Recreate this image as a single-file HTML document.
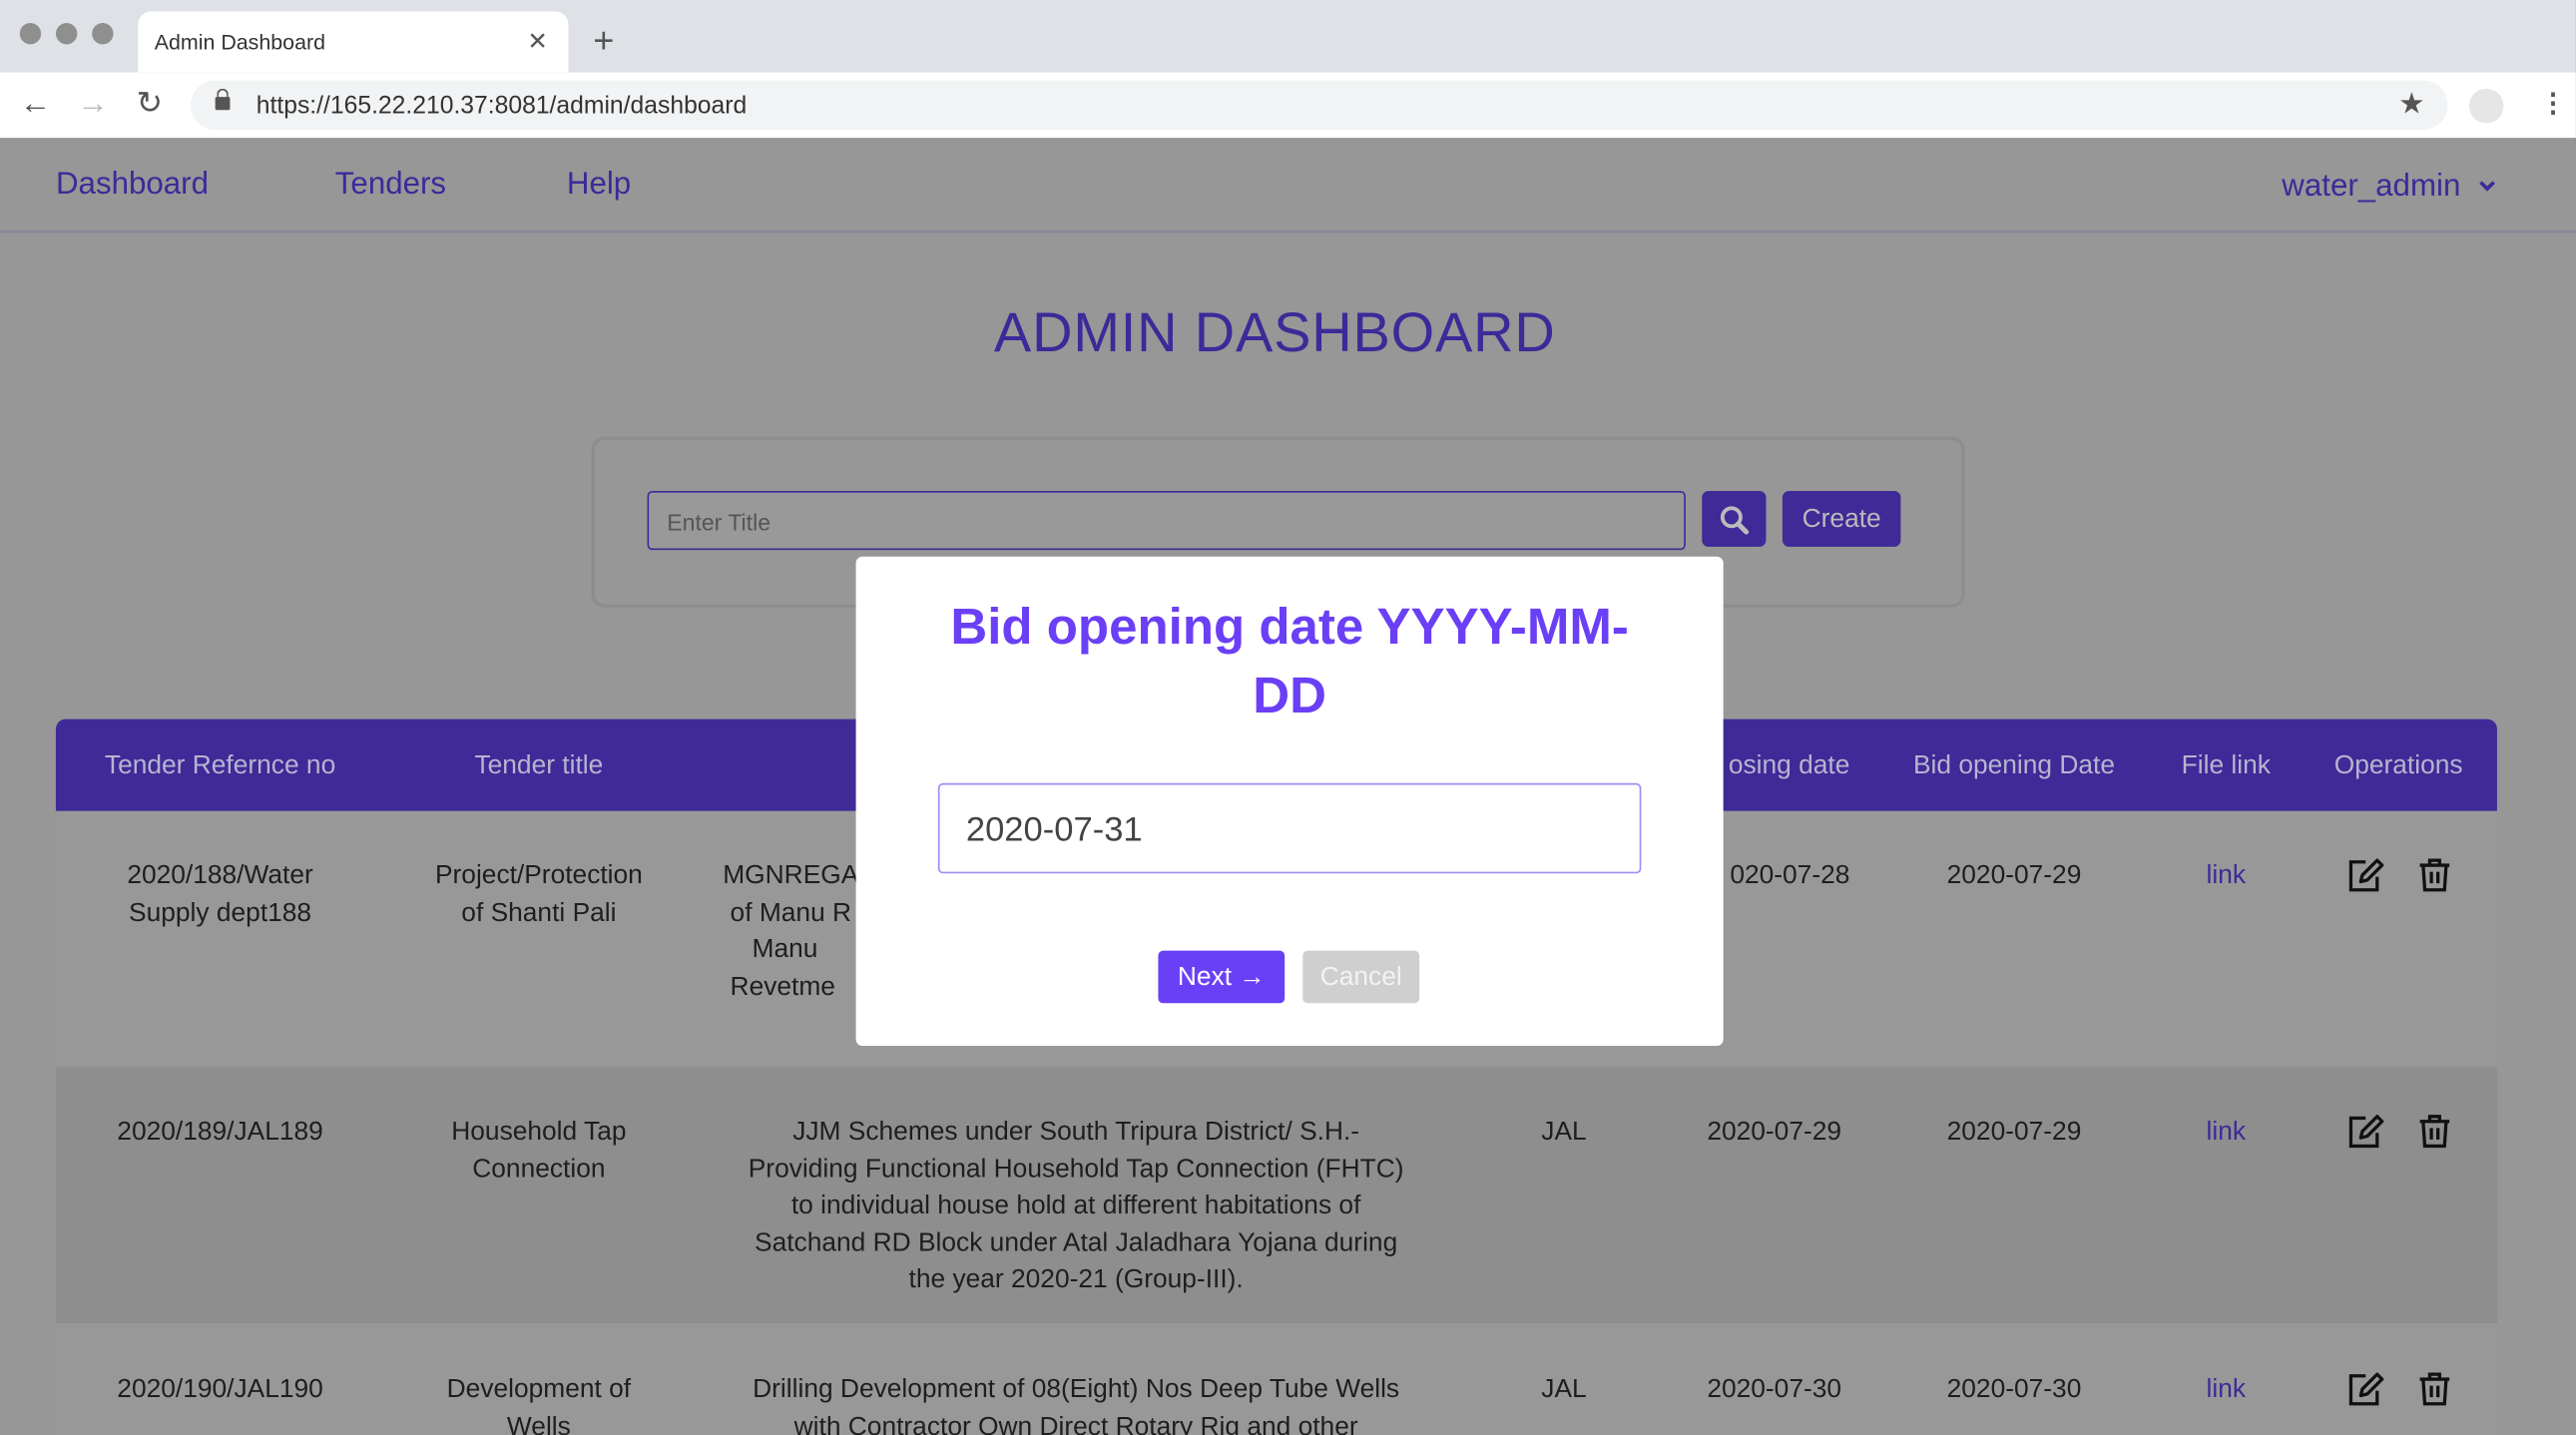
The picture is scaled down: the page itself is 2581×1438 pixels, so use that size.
<!DOCTYPE html>
<html><head><meta charset="utf-8"><style>
html,body{margin:0;padding:0;width:2581px;height:1438px;overflow:hidden;background:#979797}
#w{position:absolute;left:0;top:0;width:1568px;height:874px;transform:scale(1.646,1.6453);transform-origin:0 0;font-family:"Liberation Sans",sans-serif;overflow:hidden;background:#979797}
.a{position:absolute}
.tabbar{left:0;top:0;width:1568px;height:44px;background:#dee1e6}
.dot{width:13px;height:13px;border-radius:50%;background:#8f8f8f;top:14px}
.tab{left:84px;top:7px;width:262px;height:37px;background:#fff;border-radius:8px 8px 0 0}
.addr{left:0;top:44px;width:1568px;height:40px;background:#fff}
.url{left:116px;top:49px;width:1374px;height:30px;background:#f1f3f4;border-radius:15px}
.nav{left:0;top:84px;width:1568px;height:56px;background:#979797;border-bottom:2px solid #8c8a98}
.nl{color:#3c2a99;font-size:19px;top:101px}
.hd{background:#3f2a98;left:34px;top:438px;width:1486px;height:56px;border-radius:6px 6px 0 0}
.th{color:#b8b4d0;font-size:16px;top:458px;text-align:center}
.td{color:#1e1e1e;font-size:16px;text-align:center;line-height:22.5px}
.lk{color:#3c2a99}
</style></head><body><div id="w">
<div class="a tabbar"></div>
<div class="a dot" style="left:12px"></div><div class="a dot" style="left:34px"></div><div class="a dot" style="left:56px"></div>
<div class="a tab"></div>
<div class="a" style="left:94px;top:18px;font-size:13px;color:#333">Admin Dashboard</div>
<div class="a" style="left:321px;top:16px;font-size:15px;color:#555">✕</div>
<div class="a" style="left:361px;top:12px;font-size:22px;color:#555">+</div>
<div class="a addr"></div>
<div class="a" style="left:12px;top:53px;font-size:19px;color:#555">←</div>
<div class="a" style="left:47px;top:53px;font-size:19px;color:#bbb">→</div>
<div class="a" style="left:83px;top:52px;font-size:19px;color:#555">↻</div>
<div class="a url"></div>
<div class="a" style="left:131px;top:59px;width:9px;height:8px;background:#555;border-radius:1px"></div>
<div class="a" style="left:132px;top:54px;width:5px;height:6px;border:1.5px solid #555;border-bottom:none;border-radius:4px 4px 0 0"></div>
<div class="a" style="left:156px;top:56px;font-size:15px;color:#333">https://165.22.210.37:8081/admin/dashboard</div>
<div class="a" style="left:1460px;top:53px;font-size:18px;color:#555">★</div>
<div class="a" style="left:1503px;top:54px;width:21px;height:21px;border-radius:50%;background:#e6e6e6"></div>
<div class="a" style="left:1546px;top:53px;font-size:16px;color:#555;font-weight:bold">⋮</div>
<div class="a nav"></div>
<div class="a nl" style="left:34px;top:102px">Dashboard</div>
<div class="a nl" style="left:204px;top:102px">Tenders</div>
<div class="a nl" style="left:345px;top:102px">Help</div>
<div class="a nl" style="left:1389px;top:103px">water_admin</div>
<svg class="a" style="left:1508px;top:108px" width="12" height="10" viewBox="0 0 12 10"><path d="M2 3 L6 7 L10 3" stroke="#3c2a99" stroke-width="2.2" fill="none"/></svg>
<div class="a" style="left:0;top:184px;width:1552px;text-align:center;font-size:34px;color:#3c2a99;letter-spacing:0.5px">ADMIN DASHBOARD</div>
<div class="a" style="left:360px;top:266px;width:832px;height:100px;border:2px solid #8d8d8d;border-radius:8px;background:#979797"></div>
<div class="a" style="left:394px;top:299px;width:630px;height:34px;border:1.5px solid #3f2a98;border-radius:3px;background:#999"></div>
<div class="a" style="left:406px;top:310px;font-size:14px;color:#555">Enter Title</div>
<div class="a" style="left:1036px;top:299px;width:39px;height:34px;background:#3f2a98;border-radius:4px"></div>
<svg class="a" style="left:1046px;top:307px" width="19" height="19" viewBox="0 0 19 19"><circle cx="8" cy="8" r="5.5" stroke="#bbb" stroke-width="2.3" fill="none"/><path d="M12 12 L17 17" stroke="#bbb" stroke-width="3" stroke-linecap="round"/></svg>
<div class="a" style="left:1085px;top:299px;width:72px;height:34px;background:#3f2a98;border-radius:4px;color:#bbb;text-align:center;font-size:16px;line-height:36px">Create</div>
<div class="a hd"></div>
<div class="a th" style="left:34px;width:200px">Tender Refernce no</div>
<div class="a th" style="left:238px;width:180px">Tender title</div>
<div class="a th" style="left:1030px;width:96px;text-align:right">osing date</div>
<div class="a th" style="left:1150px;width:152px">Bid opening Date</div>
<div class="a th" style="left:1315px;width:80px">File link</div>
<div class="a th" style="left:1405px;width:110px">Operations</div>
<div class="a" style="left:34px;top:494px;width:1486px;height:156px;background:#989898"></div>
<div class="a" style="left:34px;top:650px;width:1486px;height:156px;background:#8e8e8f"></div>
<div class="a" style="left:34px;top:806px;width:1486px;height:80px;background:#989898"></div>
<div class="a td" style="left:34px;width:200px;top:523px">2020/188/Water<br>Supply dept188</div>
<div class="a td" style="left:238px;width:180px;top:523px">Project/Protection<br>of Shanti Pali</div>
<div class="a td" style="left:430px;width:100px;top:523px;text-align:left;padding-left:10px">MGNREGA<br>&nbsp;of Manu R<br>&nbsp;&nbsp;&nbsp;&nbsp;Manu<br>&nbsp;Revetme</div>
<div class="a td" style="left:1036px;width:90px;top:523px;text-align:right">020-07-28</div>
<div class="a td" style="left:1150px;width:152px;top:523px">2020-07-29</div>
<div class="a td lk" style="left:1315px;width:80px;top:523px">link</div>
<div class="a td" style="left:34px;width:200px;top:679px">2020/189/JAL189</div>
<div class="a td" style="left:238px;width:180px;top:679px">Household Tap<br>Connection</div>
<div class="a td" style="left:420px;width:470px;top:679px">JJM Schemes under South Tripura District/ S.H.-<br>Providing Functional Household Tap Connection (FHTC)<br>to individual house hold at different habitations of<br>Satchand RD Block under Atal Jaladhara Yojana during<br>the year 2020-21 (Group-III).</div>
<div class="a td" style="left:912px;width:80px;top:679px">JAL</div>
<div class="a td" style="left:1020px;width:120px;top:679px">2020-07-29</div>
<div class="a td" style="left:1150px;width:152px;top:679px">2020-07-29</div>
<div class="a td lk" style="left:1315px;width:80px;top:679px">link</div>
<div class="a td" style="left:34px;width:200px;top:836px">2020/190/JAL190</div>
<div class="a td" style="left:238px;width:180px;top:836px">Development of<br>Wells</div>
<div class="a td" style="left:420px;width:470px;top:836px">Drilling Development of 08(Eight) Nos Deep Tube Wells<br>with Contractor Own Direct Rotary Rig and other</div>
<div class="a td" style="left:912px;width:80px;top:836px">JAL</div>
<div class="a td" style="left:1020px;width:120px;top:836px">2020-07-30</div>
<div class="a td" style="left:1150px;width:152px;top:836px">2020-07-30</div>
<div class="a td lk" style="left:1315px;width:80px;top:836px">link</div>
<svg width="0" height="0" style="position:absolute"><defs>
<g id="ed"><path d="M12 4 H3 V21 H19 V13" stroke="#111" stroke-width="2" fill="none"/><path d="M9 16 L10 12 L19 3 L22 6 L13 15 Z" stroke="#111" stroke-width="2" fill="none" stroke-linejoin="round"/></g>
<g id="tr"><path d="M2 6 H20 M8 6 V3 H14 V6" stroke="#111" stroke-width="2" fill="none"/><path d="M4 6 L5 21 H17 L18 6" stroke="#111" stroke-width="2" fill="none"/><path d="M9 10 V17 M13 10 V17" stroke="#111" stroke-width="2"/></g>
</defs></svg>
<svg class="a" style="left:1428px;top:521px" width="24" height="24"><use href="#ed"/></svg>
<svg class="a" style="left:1471px;top:521px" width="22" height="24"><use href="#tr"/></svg>
<svg class="a" style="left:1428px;top:677px" width="24" height="24"><use href="#ed"/></svg>
<svg class="a" style="left:1471px;top:677px" width="22" height="24"><use href="#tr"/></svg>
<svg class="a" style="left:1428px;top:834px" width="24" height="24"><use href="#ed"/></svg>
<svg class="a" style="left:1471px;top:834px" width="22" height="24"><use href="#tr"/></svg>
<div class="a" style="left:521px;top:339px;width:528px;height:298px;background:#fff;border-radius:4px"></div>
<div class="a" style="left:521px;top:361px;width:528px;text-align:center;font-size:31px;font-weight:bold;color:#6a3ff5;line-height:42px">Bid opening date YYYY-MM-<br>DD</div>
<div class="a" style="left:571px;top:477px;width:428px;height:55px;border:1px solid #a28af5;border-radius:3px;box-sizing:border-box"></div>
<div class="a" style="left:588px;top:494px;font-size:21px;color:#444">2020-07-31</div>
<div class="a" style="left:705px;top:579px;width:77px;height:32px;background:#6a40f7;border-radius:3px;color:#fff;text-align:center;line-height:34px;font-size:16px">Next →</div>
<div class="a" style="left:793px;top:579px;width:71px;height:32px;background:#cfcfcf;border-radius:3px;color:#f3f3f3;text-align:center;line-height:34px;font-size:16px">Cancel</div>
</div></body></html>
